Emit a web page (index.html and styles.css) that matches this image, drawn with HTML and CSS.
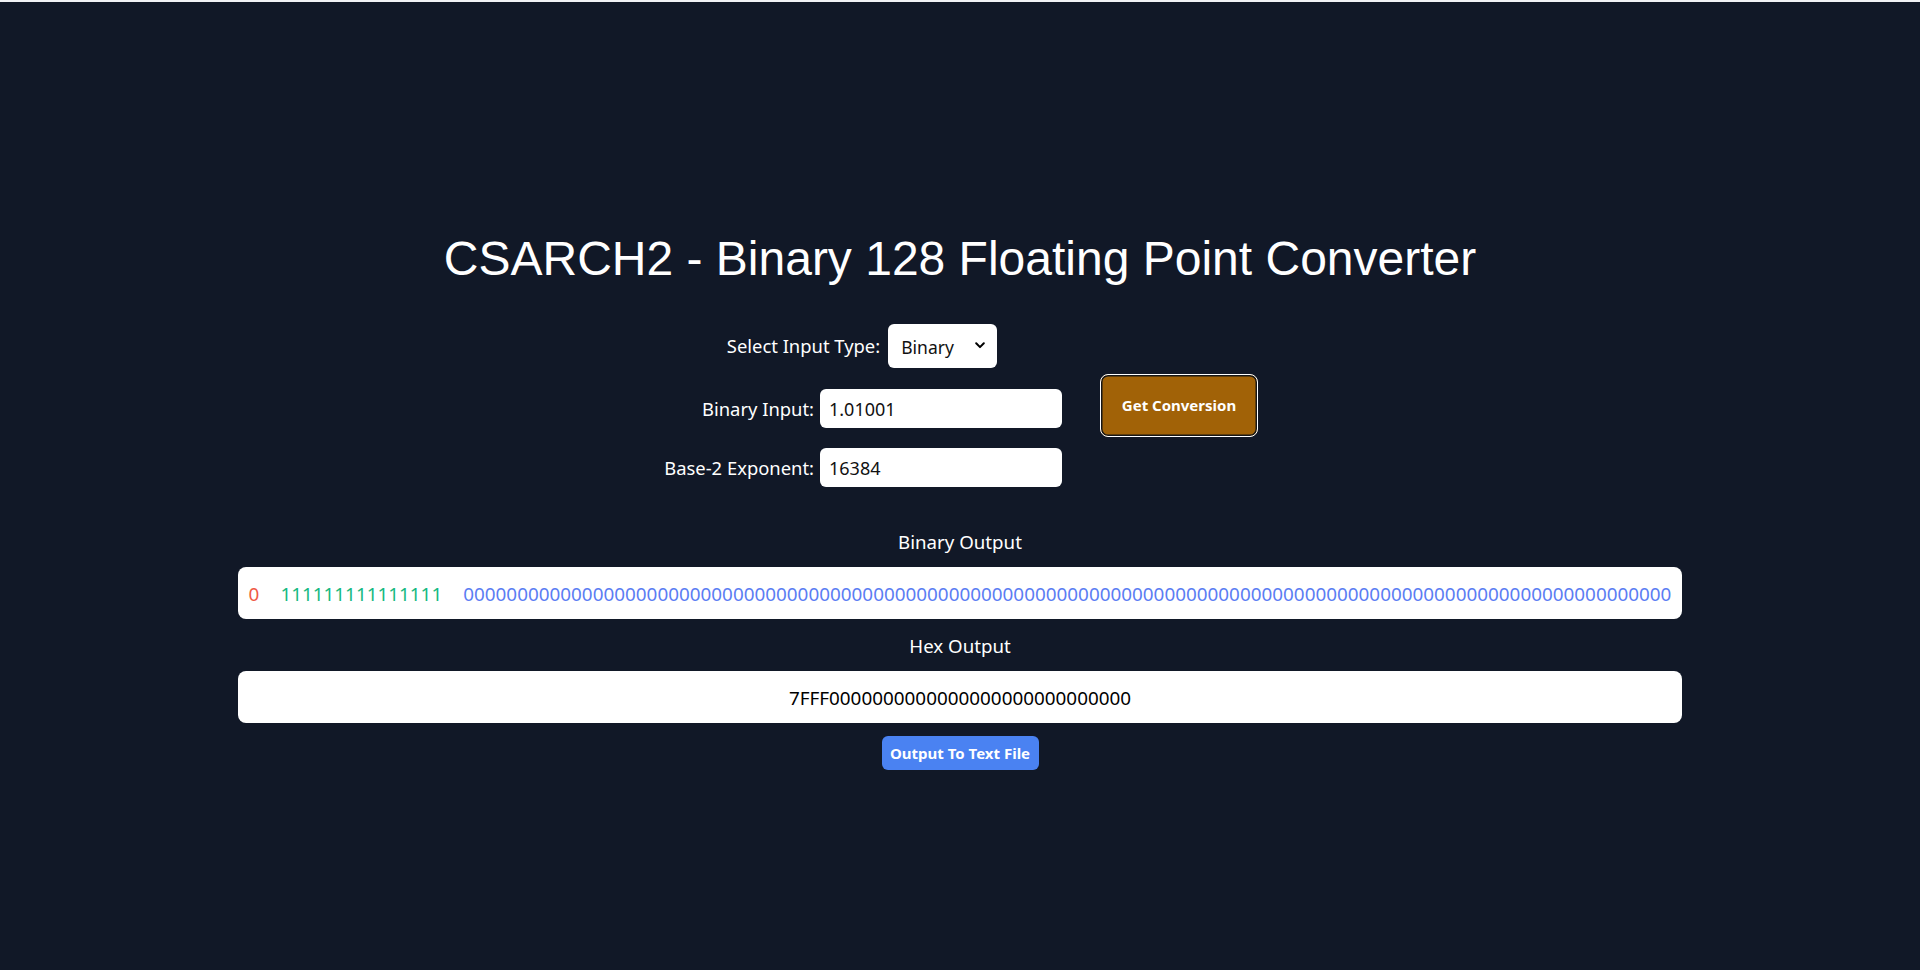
FILE: index.html
```html
<!DOCTYPE html>
<html lang="en">
<head>
<meta charset="utf-8">
<title>CSARCH2 - Binary 128 Floating Point Converter</title>
<link rel="stylesheet" href="styles.css">
</head>
<body>
<div class="topline"></div>
<main class="page">
  <h1 class="title">CSARCH2 - Binary 128 Floating Point Converter</h1>

  <section class="form">
    <div class="fields">
      <div class="select-row">
        <label class="label" for="type">Select Input Type:</label>
        <div class="select-wrap">
          <select id="type" class="select">
            <option>Binary</option>
            <option>Decimal</option>
          </select>
          <svg class="chevron" width="10" height="7" viewBox="0 0 10 7" aria-hidden="true">
            <path d="M1.2 1.3 L5 5.1 L8.8 1.3" fill="none" stroke="#000" stroke-width="2" stroke-linecap="round" stroke-linejoin="round"/>
          </svg>
        </div>
      </div>
      <div class="grid">
        <label class="label right" for="bin">Binary Input:</label>
        <input id="bin" class="input" type="text" value="1.01001">
        <label class="label right" for="exp">Base-2 Exponent:</label>
        <input id="exp" class="input" type="text" value="16384">
      </div>
    </div>
    <button class="convert">Get Conversion</button>
  </section>

  <div class="out-label">Binary Output</div>
  <div class="out-box binary">
    <span class="sign">0</span>
    <span class="exponent">111111111111111</span>
    <span class="mantissa">0000000000000000000000000000000000000000000000000000000000000000000000000000000000000000000000000000000000000000</span>
  </div>

  <div class="out-label">Hex Output</div>
  <div class="out-box hex">7FFF0000000000000000000000000000</div>

  <button class="save">Output To Text File</button>
</main>
</body>
</html>
```

FILE: styles.css
```css
* { box-sizing: border-box; }

html, body {
  margin: 0;
  padding: 0;
  background: #111827;
}

body {
  min-height: 970px;
  font-family: "Noto Sans", "Open Sans", sans-serif;
  color: #ffffff;
}

.topline {
  height: 2px;
  background: #f1f2f5;
}

.page {
  display: flex;
  flex-direction: column;
  align-items: center;
  padding-top: 233px;
}

.title {
  margin: 0;
  font-family: "Liberation Sans", Arial, sans-serif;
  font-weight: 400;
  font-size: 48px;
  line-height: 48px;
  color: #ffffff;
}

.form {
  margin-top: 41px;
  display: flex;
  align-items: center;
  gap: 38px;
}

.fields {
  width: 400px;
  display: flex;
  flex-direction: column;
  align-items: center;
  gap: 21px;
}

.select-row {
  display: flex;
  align-items: center;
  gap: 8px;
}

.label {
  font-size: 18.4px;
  line-height: 26px;
  color: #ffffff;
  white-space: nowrap;
}

.right { text-align: right; }

.select-wrap {
  position: relative;
  width: 109px;
  height: 44px;
}

.select {
  appearance: none;
  -webkit-appearance: none;
  width: 109px;
  height: 44px;
  border: none;
  border-radius: 6px;
  background: #ffffff;
  color: #111111;
  font-family: "Noto Sans", sans-serif;
  font-size: 17.5px;
  padding: 2px 0 0 13px;
  outline: none;
}

.chevron {
  position: absolute;
  right: 12px;
  top: 18px;
  pointer-events: none;
}

.grid {
  display: grid;
  grid-template-columns: 152px 242px;
  column-gap: 6px;
  row-gap: 20px;
  align-items: center;
}

.input {
  width: 242px;
  height: 39px;
  border: none;
  border-radius: 6px;
  background: #ffffff;
  color: #111111;
  font-family: "Noto Sans", sans-serif;
  font-size: 18px;
  padding: 1px 9px 0;
  outline: none;
}

.convert {
  width: 158px;
  height: 63px;
  border: 1px solid #ffffff;
  border-radius: 8px;
  box-shadow: inset 0 0 0 1.5px #161616;
  background: #a16207;
  color: #ffffff;
  font-family: "Noto Sans", sans-serif;
  font-weight: 700;
  font-size: 15px;
  padding: 0 0 1px;
  cursor: pointer;
}

.out-label {
  margin-top: 41px;
  font-size: 18.7px;
  line-height: 28px;
  color: #ffffff;
}

.out-box + .out-label { margin-top: 13px; }

.out-box {
  margin-top: 11px;
  width: 1444px;
  height: 52px;
  border-radius: 8px;
  background: #ffffff;
  display: flex;
  align-items: center;
  justify-content: center;
  font-size: 18.88px;
  line-height: 27px;
  padding-top: 2px;
  white-space: nowrap;
}

.binary { gap: 21px; }

.sign { color: #ef5a45; }
.exponent { color: #16b981; }
.mantissa { color: #5b7df3; }

.hex { color: #000000; }

.save {
  margin-top: 13px;
  width: 157px;
  height: 34px;
  border: none;
  border-radius: 6px;
  background: #4a82f2;
  color: #ffffff;
  font-family: "Noto Sans", sans-serif;
  font-weight: 700;
  font-size: 15px;
  padding: 0;
  cursor: pointer;
}
```
